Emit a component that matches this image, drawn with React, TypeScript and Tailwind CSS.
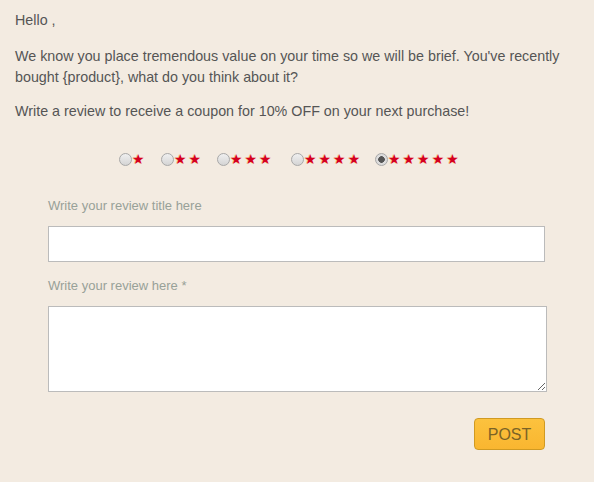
import React, { useState } from 'react';

// each rating group has its own width, as in the original form's table cells
const ratings = [
  { n: 1, w: 'w-[42px]' },
  { n: 2, w: 'w-[56px]' },
  { n: 3, w: 'w-[74px]' },
  { n: 4, w: 'w-[84px]' },
  { n: 5, w: 'w-[90px]' },
];

export default function App() {
  const [rating, setRating] = useState(5);
  const [title, setTitle] = useState('');
  const [body, setBody] = useState('');

  return (
    <div
      className="min-h-screen w-[594px] bg-[#f3ebe1] text-[#555] text-[14.3px] leading-[21px]"
      style={{ fontFamily: '"Liberation Sans", Arial, sans-serif' }}
    >
      <div className="px-[15px] pt-[10px]">
        <p>Hello ,</p>
        <p className="mt-[15px]">
          We know you place tremendous value on your time so we will be brief. You've recently
          bought {'{product}'}, what do you think about it?
        </p>
        <p className="mt-[13px]">Write a review to receive a coupon for 10% OFF on your next purchase!</p>
      </div>

      <div className="mt-[30px] flex items-center pl-[119px] h-[14px]">
        {ratings.map(({ n, w }) => (
          <label key={n} className={`flex items-center shrink-0 cursor-pointer ${w}`}>
            <input
              type="radio"
              name="rating"
              checked={rating === n}
              onChange={() => setRating(n)}
              className={`appearance-none shrink-0 w-[13px] h-[13px] rounded-full border border-[#a8a8a8] ${
                rating === n
                  ? 'bg-[radial-gradient(circle,#555_0_3px,#dcdcdc_3.6px)]'
                  : 'bg-[linear-gradient(#f0f0f0,#d4d4d4)]'
              }`}
            />
            <span
              className="text-[#d4001f] text-[14px] leading-[14px] tracking-[2px] [text-shadow:-1px_0_0_rgba(255,140,0,0.45)]"
              style={{ fontFamily: '"DejaVu Sans", sans-serif' }}
            >
              {'★'.repeat(n)}
            </span>
          </label>
        ))}
      </div>

      <div className="pl-[48px] pt-[30px]">
        <label className="block text-[#98a198] text-[13px] leading-[20px]">Write your review title here</label>
        <input
          type="text"
          value={title}
          onChange={(e) => setTitle(e.target.value)}
          className="mt-[10px] block w-[497px] h-[36px] bg-white border border-[#bbb] outline-none px-2"
        />
        <label className="mt-[14px] block text-[#98a198] text-[13px] leading-[20px]">Write your review here *</label>
        <textarea
          value={body}
          onChange={(e) => setBody(e.target.value)}
          className="mt-[10px] block w-[499px] h-[86px] bg-white border border-[#bbb] outline-none px-2"
        />
        <div className="w-[497px] flex justify-end mt-[26px]">
          <button className="w-[71px] h-[32px] rounded-[4px] border border-[#d09a22] bg-[linear-gradient(#fcc23e,#f9b630)] text-[#7a6326] text-[16px]">
            POST
          </button>
        </div>
      </div>
    </div>
  );
}
